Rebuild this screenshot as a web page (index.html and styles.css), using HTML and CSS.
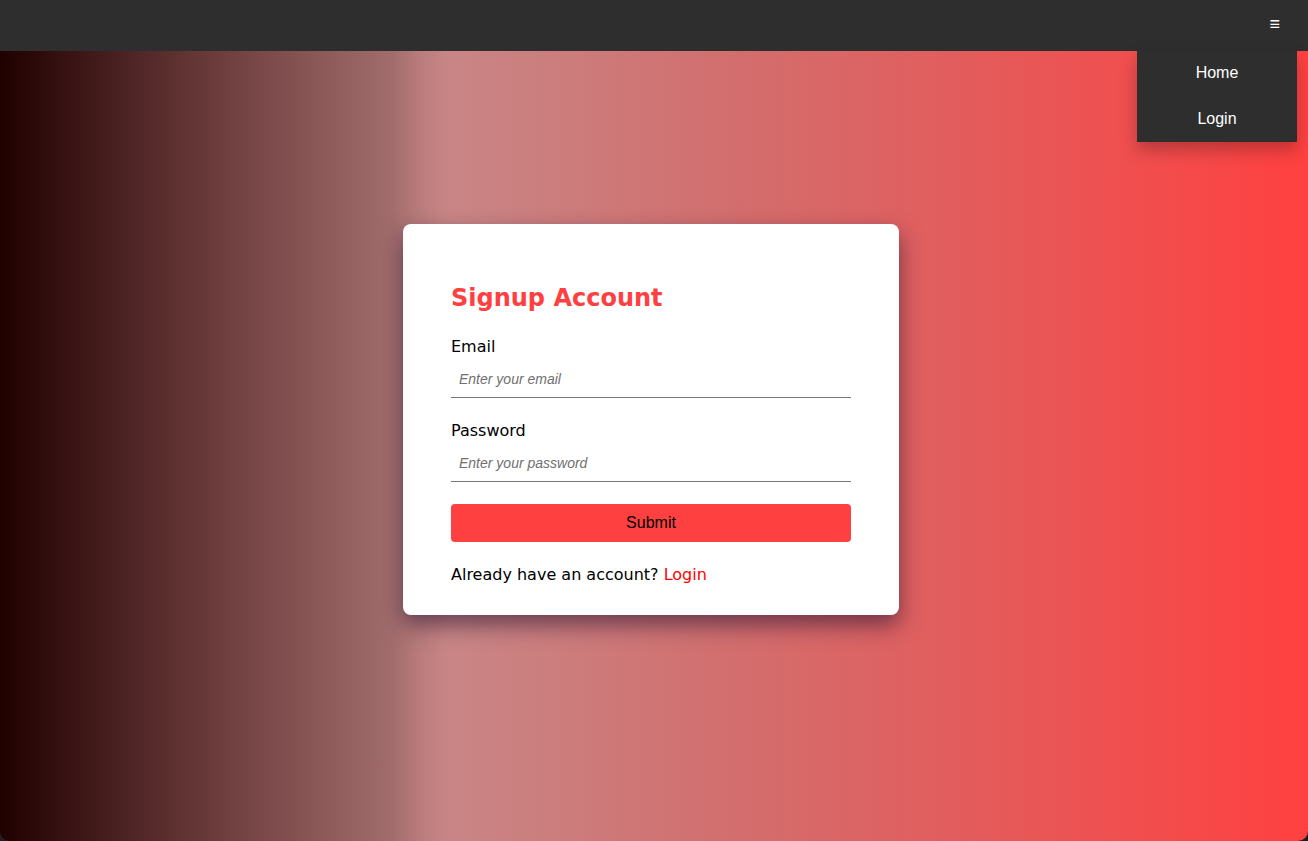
FILE: index.html
```html
<!DOCTYPE html>
<html lang="en">
<head>
<meta charset="utf-8">
<title>Signup</title>
<link rel="stylesheet" href="styles.css">
</head>
<body>
<nav class="navbar">
  <button class="menu-toggle" type="button">&#8801;</button>
  <div class="dropdown">
    <a class="dropdown-item" href="#">Home</a>
    <a class="dropdown-item" href="#">Login</a>
  </div>
</nav>
<main class="page">
  <form class="card">
    <h2 class="card-title">Signup Account</h2>
    <label class="field-label" for="email">Email</label>
    <input class="field-input" id="email" type="email" placeholder="Enter your email">
    <label class="field-label field-gap" for="password">Password</label>
    <input class="field-input" id="password" type="password" placeholder="Enter your password">
    <button class="submit-btn" type="button">Submit</button>
    <p class="switch-text">Already have an account? <a class="switch-link" href="#">Login</a></p>
  </form>
</main>
</body>
</html>
```
FILE: styles.css
```css
* { box-sizing: border-box; }
html { background: #1e1e1e; }
body {
  margin: 0;
  height: 841px;
  display: flex;
  flex-direction: column;
  font-family: "DejaVu Sans", Verdana, sans-serif;
  overflow: hidden;
}
.navbar {
  position: relative;
  height: 51px;
  flex: none;
  background: #2e2e2e;
  display: flex;
  justify-content: flex-end;
  align-items: center;
  padding-right: 28px;
  z-index: 2;
}
.menu-toggle {
  background: none;
  border: none;
  color: #fff;
  font-family: "Liberation Sans", Arial, sans-serif;
  font-size: 18px;
  padding: 0;
  line-height: 1;
  margin-top: -3px;
  cursor: pointer;
}
.dropdown {
  position: absolute;
  top: 51px;
  right: 11px;
  width: 160px;
  background: #2e2e2e;
  box-shadow: 0 8px 16px rgba(0, 0, 0, 0.25);
  display: flex;
  flex-direction: column;
  padding: 0 0 1px;
}
.dropdown-item {
  display: block;
  height: 45px;
  line-height: 43px;
  text-align: center;
  color: #fff;
  text-decoration: none;
  font-family: "Liberation Sans", Arial, sans-serif;
  font-size: 16px;
}
.dropdown-item + .dropdown-item { line-height: 45px; }
.page {
  flex: 1;
  display: flex;
  justify-content: center;
  align-items: center;
  padding: 0 6px 54px 0;
  background: linear-gradient(to right, #200000 0%, #6a3a3a 16%, #a26c6c 30%, #b87b7b 32%, #c88585 34%, #c98585 35%, #d26f6f 55%, #e15e5e 72%, #ff4040 100%);
  border-radius: 0 0 10px 10px;
}
.card {
  width: 496px;
  background: #fff;
  border-radius: 8px;
  padding: 48px 48px 31px;
  display: flex;
  flex-direction: column;
  box-shadow: 0 10px 22px rgba(40, 20, 50, 0.6);
}
.card-title {
  margin: 0 0 14px;
  height: 50px;
  padding-top: 1px;
  line-height: 50px;
  font-size: 24px;
  font-weight: bold;
  color: #ff4040;
}
.field-label {
  display: block;
  font-size: 16px;
  line-height: 20px;
  padding-top: 1px;
  height: 20px;
  color: #000;
  margin-bottom: 4px;
}
.field-gap { margin-top: 22px; }
.field-input {
  height: 38px;
  border: none;
  border-bottom: 1px solid #777;
  padding: 1px 8px 0;
  font-family: "Liberation Sans", Arial, sans-serif;
  font-size: 14px;
  font-style: italic;
  outline: none;
  background: transparent;
}
.field-input::placeholder { color: #707070; }
.submit-btn {
  margin-top: 22px;
  height: 38px;
  background: #ff4040;
  border: none;
  border-radius: 4px;
  color: #000;
  font-family: "Liberation Sans", Arial, sans-serif;
  font-size: 16px;
  cursor: pointer;
}
.switch-text {
  margin: 22px 0 0;
  padding-top: 1px;
  font-size: 16px;
  line-height: 20px;
  height: 20px;
  color: #000;
}
.switch-link {
  color: #f00;
  text-decoration: none;
}
```
